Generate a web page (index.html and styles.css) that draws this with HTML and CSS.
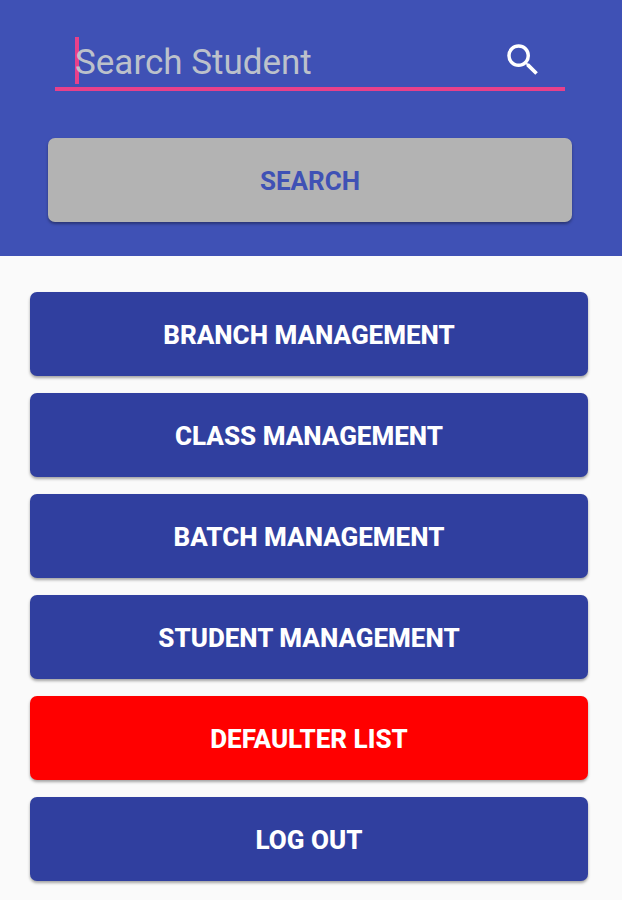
FILE: index.html
```html
<!DOCTYPE html>
<html lang="en">

<head>
  <meta charset="UTF-8">
  <meta name="viewport" content="width=device-width, initial-scale=1.0">
  <title>Student Management</title>
  <link rel="stylesheet" href="styles.css">
</head>

<body>
  <form class="search">
    <div class="searchField">
      <span class="cursor"></span>
      <input type="text" name="student" class="searchInput" placeholder="Search Student" aria-label="Search Student">
      <svg class="searchIcon" viewBox="0 0 24 24" aria-hidden="true">
        <path d="M15.5 14h-.79l-.28-.27A6.471 6.471 0 0 0 16 9.5 6.5 6.5 0 1 0 9.5 16c1.61 0 3.09-.59 4.23-1.57l.27.28v.79l5 4.99L20.49 19l-4.99-5zm-6 0C7.01 14 5 11.99 5 9.5S7.01 5 9.5 5 14 7.01 14 9.5 11.99 14 9.5 14z"/>
      </svg>
    </div>
    <button type="submit" class="btn searchBtn">SEARCH</button>
  </form>
  <main class="menu">
    <button type="button" class="btn">BRANCH MANAGEMENT</button>
    <button type="button" class="btn">CLASS MANAGEMENT</button>
    <button type="button" class="btn">BATCH MANAGEMENT</button>
    <button type="button" class="btn">STUDENT MANAGEMENT</button>
    <button type="button" class="btn defaulter">DEFAULTER LIST</button>
    <button type="button" class="btn">LOG OUT</button>
  </main>
</body>

</html>
```

FILE: styles.css
```css
* {
  box-sizing: border-box;
}

body {
  margin: 0;
  font-family: Roboto, sans-serif;
  background-color: #fafafa;
}

.search {
  background-color: #3f51b5;
  padding: 37px 50px 34px 48px;
}

.searchField {
  display: flex;
  align-items: flex-start;
  height: 54px;
  margin: 0 7px 47px 7px;
  padding: 0 21px 0 20px;
  border-bottom: 4px solid #e8408a;
}

.cursor {
  width: 4px;
  height: 47px;
  background-color: #e8408a;
}

.searchInput {
  flex: 1;
  min-width: 0;
  height: 50px;
  margin-left: -4px;
  padding: 0;
  border: none;
  outline: none;
  background: none;
  font-family: inherit;
  font-size: 35px;
  color: white;
}

.searchInput::placeholder {
  color: #bcc1cb;
  opacity: 1;
}

.searchIcon {
  width: 42px;
  height: 42px;
  margin-top: 2px;
  fill: white;
}

.btn {
  display: block;
  width: 100%;
  height: 84px;
  padding: 1px 0 0;
  border: none;
  border-radius: 7px;
  background-color: #303f9f;
  box-shadow: 0 2px 3px rgba(0, 0, 0, 0.35);
  color: white;
  font-family: inherit;
  font-size: 26px;
  font-weight: 800;
}

.searchBtn {
  background-color: #b3b3b3;
  color: #3f51b5;
  font-weight: bold;
}

.menu {
  display: grid;
  gap: 17px;
  padding: 36px 34px 17px 30px;
}

.defaulter {
  background-color: #ff0000;
}
```
